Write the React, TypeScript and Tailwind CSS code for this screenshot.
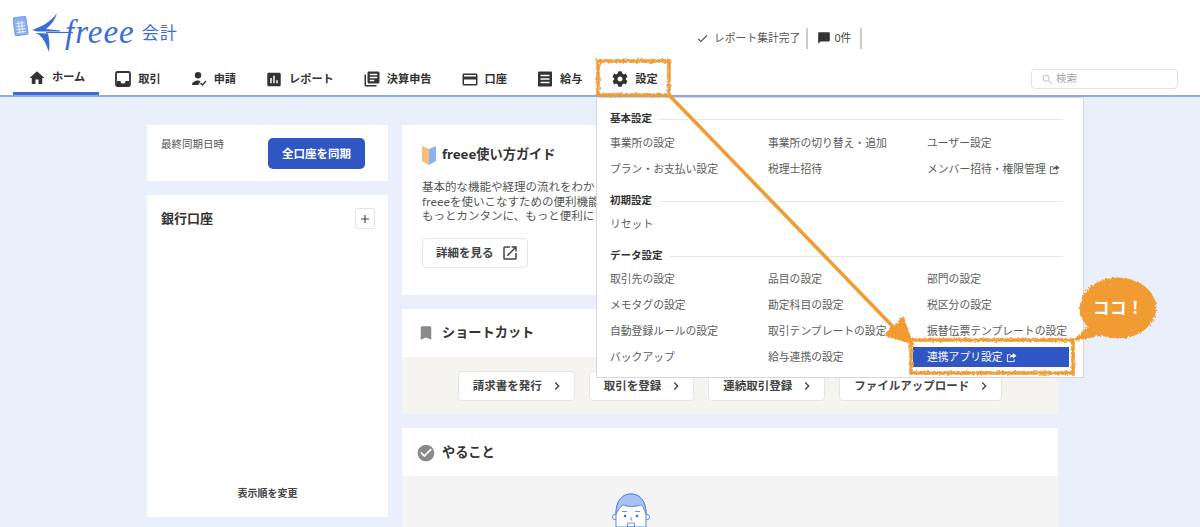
import { FaCog } from 'react-icons/fa';
import { MdAssessment, MdCreditCard, MdHome, MdLibraryBooks, MdOutlineOpenInNew, MdChatBubble, MdCheck, MdAdd, MdChevronRight, MdSearch, MdBookmark, MdCheckCircle } from 'react-icons/md';

const FONT = '[font-family:"Noto_Sans","Noto_Sans_CJK_JP",sans-serif]';

function TrayIcon() {
  return (
    <svg viewBox="0 0 16 16" className="h-4 w-4">
      <rect x="1" y="1" width="14" height="14" rx="1.5" fill="none" stroke="#333" strokeWidth="1.8" />
      <path d="M2 10h3.5a2.5 2.5 0 0 0 5 0H14v4.5H2z" fill="#333" />
    </svg>
  );
}

function PersonCheckIcon() {
  return (
    <svg viewBox="0 0 16 16" className="h-4 w-4">
      <circle cx="7" cy="4.2" r="3.2" fill="#333" />
      <path d="M1 14c0-3 3-4.6 6-4.6 1 0 2 .2 2.6.5L7.4 14z" fill="#333" />
      <path d="M9.5 12l2 2 3.5-4" fill="none" stroke="#333" strokeWidth="1.4" />
    </svg>
  );
}

function ReceiptIcon() {
  return (
    <svg viewBox="0 0 16 16" className="h-4 w-4">
      <rect x="1" y="0.5" width="14" height="15" rx="1" fill="#333" />
      <path d="M3.5 4.5h9M3.5 8h9M3.5 11.5h9" stroke="#fff" strokeWidth="1.5" />
    </svg>
  );
}

function ShareIcon({ color = '#555' }: { color?: string }) {
  return (
    <svg viewBox="0 0 12 12" className="ml-[3px] inline-block h-[11px] w-[11px]">
      <path d="M5 3H1.5v7.5H9V8" fill="none" stroke={color} strokeWidth="1" />
      <path d="M7.5 1L11.5 4 7.5 7V5.3C5.8 5.3 4.6 6 3.8 7.3 4 4.8 5.4 3 7.5 2.8z" fill={color} />
    </svg>
  );
}

function Logo() {
  return (
    <div className="flex w-[170px] items-center text-[#3a6bd8]">
      <svg viewBox="0 0 60 42" className="h-[42px] w-[60px] shrink-0">
        <g transform="rotate(-8 8 14)">
          <rect x="1" y="5" width="13" height="18" rx="1.5" fill="#8fb0ee" stroke="#6f98e8" strokeWidth="1" />
          <path d="M3 11h9M3 14h9M3 17h9M3 20h9M6 9v12M9 9v12" stroke="#fff" strokeWidth="0.7" />
        </g>
        <path d="M19 18C28 15 38 10 44 1 42 8 38 13 33 17L47 18.500V19.500L33 19.500 24 19.500z" fill="#3a6bd8" />
        <path d="M22 21C30 23 33 32 36 40 37 32 36 26 35 21.500z" fill="#3a6bd8" />
        <path d="M33 20.500H60" stroke="#3a6bd8" strokeWidth="1.100" />
      </svg>
      <span className="-ml-[8px] -mt-[2px] text-[33px] leading-none tracking-[1px] italic [font-family:'Liberation_Serif',serif]">freee</span>
      <span className={`ml-[7px] text-[17px] tracking-[1px] ${FONT}`}>会計</span>
    </div>
  );
}

const navItems = [
  { label: 'ホーム', icon: <MdHome className="h-[20px] w-[20px] text-[#333]" />, active: true },
  { label: '取引', icon: <TrayIcon /> },
  { label: '申請', icon: <PersonCheckIcon /> },
  { label: 'レポート', icon: <MdAssessment className="h-[19px] w-[19px] text-[#333]" /> },
  { label: '決算申告', icon: <MdLibraryBooks className="h-[20px] w-[20px] text-[#333]" /> },
  { label: '口座', icon: <MdCreditCard className="h-[21px] w-[21px] text-[#333]" /> },
  { label: '給与', icon: <ReceiptIcon /> },
  { label: '設定', icon: <FaCog className="h-[16px] w-[16px] text-[#333]" /> },
];

const menuBasic = ['事業所の設定', '事業所の切り替え・追加', 'ユーザー設定', 'プラン・お支払い設定', '税理士招待', 'メンバー招待・権限管理'];
const menuData = [
  '取引先の設定', '品目の設定', '部門の設定',
  'メモタグの設定', '勘定科目の設定', '税区分の設定',
  '自動登録ルールの設定', '取引テンプレートの設定', '振替伝票テンプレートの設定',
  'バックアップ', '給与連携の設定', '連携アプリ設定',
];

function MenuHeading({ label }: { label: string }) {
  return (
    <div className="mb-[1px] flex h-[18px] items-center gap-[7px] pr-[7px]">
      <span className="text-[10.500px] font-bold text-[#333]">{label}</span>
      <div className="h-px flex-1 bg-[#e8e8e8]" />
    </div>
  );
}

function MenuItem({ label }: { label: string }) {
  const selected = label === '連携アプリ設定';
  const external = selected || label === 'メンバー招待・権限管理';
  return (
    <div className="flex h-[26px] items-center">
      <span
        className={
          selected
            ? '-ml-[14px] flex h-[20px] w-[156px] items-center whitespace-nowrap bg-[#3056c4] pl-[14px] text-[10.800px] text-white'
            : 'flex items-center whitespace-nowrap text-[10.800px] text-[#5c5c5c]'
        }
      >
        {label}
        {external && <ShareIcon color={selected ? '#fff' : '#555'} />}
      </span>
    </div>
  );
}

function SettingsMenu() {
  return (
    <div className="absolute left-[596px] top-[97px] h-[281px] w-[488px] border border-[#d8d8d8] bg-white pl-[13px] pr-[13px] pt-[12px]">
      <MenuHeading label="基本設定" />
      <div className="mt-[2px] grid grid-cols-[158px_159px_1fr]">
        {menuBasic.map((m) => <MenuItem key={m} label={m} />)}
      </div>
      <div className="mt-[10px]">
        <MenuHeading label="初期設定" />
        <MenuItem label="リセット" />
      </div>
      <div className="mt-[10px]">
        <MenuHeading label="データ設定" />
        <div className="grid grid-cols-[158px_159px_1fr]">
          {menuData.map((m) => <MenuItem key={m} label={m} />)}
        </div>
      </div>
    </div>
  );
}

function Annotations() {
  return (
    <svg className="pointer-events-none absolute inset-0" width="1200" height="527" viewBox="0 0 1200 527">
      <defs>
        <filter id="rough" x="-5%" y="-5%" width="110%" height="110%">
          <feTurbulence type="fractalNoise" baseFrequency="0.4" numOctaves="2" seed="3" />
          <feDisplacementMap in="SourceGraphic" scale="3.500" />
        </filter>
      </defs>
      <g filter="url(#rough)" stroke="#f29b30" fill="none">
        <rect x="598" y="61" width="71" height="34" strokeWidth="3.500" />
        <path d="M669 95L902 336" strokeWidth="3.500" />
        <path d="M912 343L903 318 885 335z" fill="#f29b30" strokeWidth="2" />
        <rect x="911" y="340" width="162" height="33" strokeWidth="3.500" />
        <ellipse cx="1118" cy="308" rx="38" ry="30" fill="#f29b30" strokeWidth="1" />
        <path d="M1073 341L1094 321 1106 334z" fill="#f29b30" strokeWidth="1" />
      </g>
      <text x="1093" y="314" fill="#fff" fontSize="16.500" fontWeight="700" letterSpacing="0.500" fontFamily="'Noto Sans CJK JP', sans-serif">ココ！</text>
    </svg>
  );
}

function Face() {
  return (
    <svg viewBox="0 0 38 34" className="h-[34px] w-[38px]">
      <circle cx="3" cy="24" r="2.500" fill="#fff" stroke="#5b86e6" strokeWidth="1" />
      <circle cx="35" cy="24" r="2.500" fill="#fff" stroke="#5b86e6" strokeWidth="1" />
      <path d="M4 20C4 8 10 1 19 1s15 7 15 19v14H4z" fill="#fff" stroke="#5b86e6" strokeWidth="1" />
      <path d="M4 21C4 8 10 1 19 1s15 7 15 20c-2-5-3-8-5-9-6 2-13 2-18 0-3 2-5 5-7 9z" fill="#a9c2f4" stroke="#5b86e6" strokeWidth="1" />
      <circle cx="13" cy="23" r="1.300" fill="#3a6bd8" />
      <circle cx="25" cy="23" r="1.300" fill="#3a6bd8" />
      <path d="M10 18.500h5M23 18.500h5M19 24v3h1.500M15.500 30h7v4h-7z" fill="none" stroke="#5b86e6" strokeWidth="0.900" />
    </svg>
  );
}

const shortcuts = ['請求書を発行', '取引を登録', '連続取引登録', 'ファイルアップロード'];

export default function App() {
  return (
    <div className={`relative h-[527px] w-[1200px] overflow-hidden bg-[#e9f0fc] ${FONT}`}>
      <header className="h-[97px] border-b-2 border-[#8fa8ea] bg-white">
        <div className="flex h-[60px] pl-[13px]">
          <div className="pt-[12px]"><Logo /></div>
          <div className="ml-[513px] flex h-[60px] items-center pt-[16px] text-[10.800px] text-[#555]">
            <MdCheck className="mr-[5px] h-[13px] w-[13px] text-[#444]" />
            <span>レポート集計完了</span>
            <div className="mx-[6px] h-[21px] w-[2px] bg-[#ccc]" />
            <MdChatBubble className="ml-[3px] mr-[3px] h-[14px] w-[14px] text-[#333]" />
            <span className="text-[#444]">0件</span>
            <div className="ml-[9px] h-[21px] w-[2px] bg-[#ccc]" />
          </div>
        </div>
        <div className="flex h-[35px] items-stretch pl-[13px]">
          {navItems.map((item) => (
            <div
              key={item.label}
              className={`flex items-center pl-[15px] pr-[14px] pt-[3px] ${item.active ? 'border-b-[3px] border-[#3a6bd8]' : ''}`}
            >
              <div className="flex w-[18px] items-center justify-center">{item.icon}</div>
              <span className="ml-[6px] whitespace-nowrap text-[11.200px] font-bold text-[#333]">{item.label}</span>
            </div>
          ))}
          <div className="ml-auto mr-[22px] mt-[9px] flex h-[20px] w-[147px] items-center rounded-[4px] border border-[#e2e2e2] pl-[9px]">
            <MdSearch className="h-[13px] w-[13px] text-[#c8c8c8]" />
            <span className="ml-[2px] text-[10.500px] text-[#a5a5a5]">検索</span>
          </div>
        </div>
      </header>

      <main className="flex gap-[14px] pl-[147px] pt-[28px]">
        <div className="flex w-[241px] flex-col gap-[14px]">
          <section className="flex h-[56px] items-start justify-between bg-white pl-[14px] pr-[23px] pt-[13px]">
            <span className="mt-[-1px] text-[10.500px] text-[#555]">最終同期日時</span>
            <button className="h-[31px] w-[97px] rounded-[5px] bg-[#3056c4] text-[11.500px] font-bold text-white">全口座を同期</button>
          </section>
          <section className="flex h-[322px] flex-col bg-white pl-[14px] pr-[13px] pt-[13px]">
            <div className="flex items-center justify-between">
              <span className="text-[13px] font-bold text-[#333]">銀行口座</span>
              <div className="flex h-[21px] w-[20px] items-center justify-center rounded-[3px] border border-[#e2e2e2]">
                <MdAdd className="h-[14px] w-[14px] text-[#444]" />
              </div>
            </div>
            <div className="mt-auto pb-[16px] pr-[1px] text-center text-[10px] font-bold text-[#444]">表示順を変更</div>
          </section>
        </div>

        <div className="flex w-[656px] flex-col gap-[14px]">
          <section className="h-[170px] bg-white pl-[20px] pt-[20px]">
            <div className="flex items-center">
              <svg viewBox="0 0 14 20" className="h-[20px] w-[14px]">
                <path d="M0 1l7 3v16L0 16z" fill="#f2c078" />
                <path d="M14 1L7 4v16l7-4z" fill="#8fb0ee" />
              </svg>
              <h2 className="ml-[6px] text-[13.200px] font-bold text-[#333]">freee使い方ガイド</h2>
            </div>
            <p className="mt-[15px] whitespace-nowrap text-[11.500px] leading-[14.500px] text-[#555]">
              基本的な機能や経理の流れをわか<br />
              freeeを使いこなすための便利機能<br />
              もっとカンタンに、もっと便利に
            </p>
            <button className="mt-[14px] flex h-[30px] w-[106px] items-center rounded-[4px] border border-[#e5e5e5] pl-[13px] text-[11.500px] font-bold text-[#444]">
              詳細を見る
              <MdOutlineOpenInNew className="ml-[7px] h-[18px] w-[18px] text-[#444]" />
            </button>
          </section>

          <section className="h-[105px] bg-white">
            <div className="flex h-[48px] items-center pl-[15px]">
              <MdBookmark className="h-[18px] w-[18px] text-[#8a8a8a]" />
              <h2 className="ml-[7px] text-[13.200px] font-bold text-[#333]">ショートカット</h2>
            </div>
            <div className="flex h-[57px] items-start justify-center gap-[14px] bg-[#f5f4f1] pt-[14px]">
              {shortcuts.map((s) => (
                <button key={s} className="flex h-[30px] items-center rounded-[4px] border border-[#e5e5e5] bg-white pl-[14px] pr-[9px] text-[11.500px] font-bold text-[#444]">
                  {s}
                  <MdChevronRight className="ml-[7px] h-[16px] w-[16px] text-[#444]" />
                </button>
              ))}
            </div>
          </section>

          <section className="bg-white">
            <div className="flex h-[48px] items-center pl-[14px] pt-[1px]">
              <MdCheckCircle className="h-[20px] w-[20px] text-[#8a8a8a]" />
              <h2 className="ml-[6px] text-[13.200px] font-bold text-[#333]">やること</h2>
            </div>
            <div className="h-[60px] bg-[#f5f4f5] pl-[210px] pt-[17px]">
              <Face />
            </div>
          </section>
        </div>
      </main>

      <SettingsMenu />
      <Annotations />
    </div>
  );
}
